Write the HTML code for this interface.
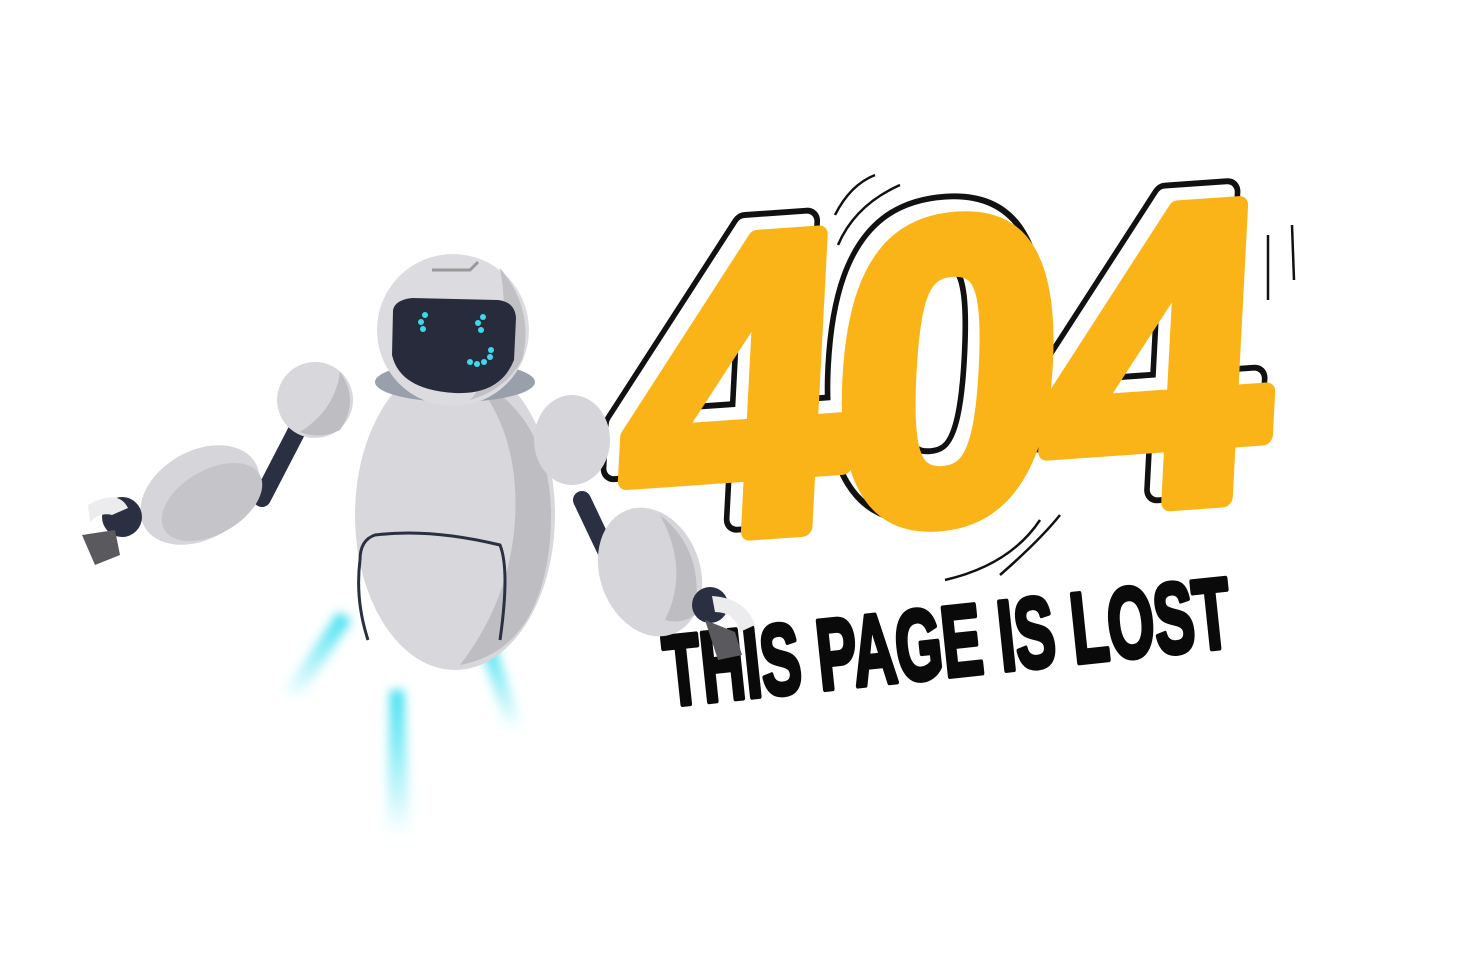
<!DOCTYPE html>
<html><head><meta charset="utf-8"><style>
html,body{margin:0;padding:0;background:#fff;width:1470px;height:980px;overflow:hidden}
svg{display:block}
</style></head><body>
<svg width="1470" height="980" viewBox="0 0 1470 980" xmlns="http://www.w3.org/2000/svg">
<defs>
<filter id="bl" x="-50%" y="-50%" width="200%" height="200%"><feGaussianBlur stdDeviation="5"/></filter>
<linearGradient id="jet" x1="0" y1="0" x2="0" y2="1"><stop offset="0" stop-color="#3fe0f0"/><stop offset="1" stop-color="#3fe0f0" stop-opacity="0"/></linearGradient>
</defs>
<g filter="url(#bl)">
<path d="M390 690 L404 690 L410 835 L386 835 Z" fill="url(#jet)"/>
<path d="M338 612 L352 620 L300 700 L285 690 Z" fill="url(#jet)"/>
<path d="M478 640 L492 636 L522 725 L506 730 Z" fill="url(#jet)"/>
</g>
<g transform="translate(618,540) rotate(-4) skewX(-7) scale(0.94,0.98)" font-family="Liberation Sans, sans-serif" font-weight="bold" font-size="430" stroke-linejoin="round">
<text x="-14" y="-14" fill="#fff" stroke="#111" stroke-width="30" letter-spacing="-15">404</text>
<text x="-14" y="-14" fill="#fff" stroke="#fff" stroke-width="18" letter-spacing="-15">404</text>
<text x="0" y="0" fill="#fbb418" stroke="#fbb418" stroke-width="20" letter-spacing="-15">404</text>
</g>
<g fill="none" stroke="#111" stroke-width="2.5">
<path d="M835 215 Q850 185 875 175"/><path d="M838 245 Q855 205 900 185"/>
<path d="M945 580 Q1010 565 1040 520"/><path d="M1000 575 Q1040 540 1060 515"/>
<path d="M1292 225 L1294 280"/><path d="M1268 235 L1268 300"/>
</g>
<text transform="translate(668,706) rotate(-6) scale(0.6,1)" font-family="Liberation Sans, sans-serif" font-weight="bold" font-size="100" fill="#0a0a0a" stroke="#0a0a0a" stroke-width="5" stroke-linejoin="round">THIS PAGE IS LOST</text>
<line x1="305" y1="415" x2="262" y2="498" stroke="#2a2f42" stroke-width="18" stroke-linecap="round"/>
<ellipse cx="200" cy="495" rx="64" ry="44" transform="rotate(-30 200 495)" fill="#d6d6da"/>
<ellipse cx="212" cy="502" rx="55" ry="32" transform="rotate(-30 212 502)" fill="#c4c4c9"/>
<circle cx="122" cy="517" r="20" fill="#2a2f42"/>
<path d="M88 505 Q118 488 128 508 L112 515 Q100 512 90 522 Z" fill="#ececee"/>
<path d="M82 535 L115 530 L120 555 L95 565 Z" fill="#5a5a5e"/>
<ellipse cx="455" cy="515" rx="100" ry="155" fill="#d8d8dc"/>
<path d="M470 375 Q560 420 550 540 Q540 650 460 665 Q510 600 515 520 Q520 430 470 375Z" fill="#bdbdc2"/>
<path d="M360 560 Q360 540 375 535 Q430 528 500 545 Q510 570 500 640" fill="none" stroke="#2a2f42" stroke-width="3"/>
<path d="M360 560 Q355 600 368 640" fill="none" stroke="#2a2f42" stroke-width="3"/>
<circle cx="315" cy="400" r="38" fill="#d8d8dc"/>
<path d="M340 372 Q360 400 340 430 Q320 440 300 432 Q335 410 340 372Z" fill="#bdbdc2"/>
<line x1="582" y1="500" x2="620" y2="580" stroke="#2a2f42" stroke-width="18" stroke-linecap="round"/>
<ellipse cx="572" cy="440" rx="38" ry="45" fill="#d6d6da"/>
<ellipse cx="650" cy="572" rx="50" ry="66" transform="rotate(-20 650 572)" fill="#d6d6da"/>
<path d="M660 515 Q705 550 695 615 Q680 625 665 620 Q690 570 660 515Z" fill="#bdbdc2"/>
<circle cx="710" cy="605" r="18" fill="#2a2f42"/>
<path d="M712 596 Q745 598 755 625 L740 632 Q735 612 715 612Z" fill="#ececee"/>
<path d="M705 620 L735 632 L742 655 L718 660Z" fill="#5a5a5e"/>
<ellipse cx="455" cy="382" rx="80" ry="20" fill="#9aa0ab"/>
<circle cx="453" cy="330" r="76" fill="#dcdce0"/>
<path d="M500 268 Q535 310 522 360 Q505 390 470 400 Q515 350 500 268Z" fill="#c0c0c5"/>
<path d="M393 310 Q395 300 412 298 L498 300 Q515 302 516 318 L514 360 Q500 395 455 393 Q400 390 392 355Z" fill="#282b3b"/>
<path d="M432 270 L470 270 L478 262" fill="none" stroke="#999" stroke-width="3"/>
<g fill="#40d8e8">
<circle cx="425" cy="315" r="3"/><circle cx="421" cy="322" r="3"/><circle cx="423" cy="329" r="3"/>
<circle cx="483" cy="317" r="3"/><circle cx="478" cy="323" r="3"/><circle cx="481" cy="330" r="3"/>
<circle cx="470" cy="362" r="3"/><circle cx="477" cy="364" r="3"/><circle cx="484" cy="362" r="3"/><circle cx="490" cy="357" r="3"/><circle cx="491" cy="350" r="3"/>
</g>
</svg>
</body></html>
